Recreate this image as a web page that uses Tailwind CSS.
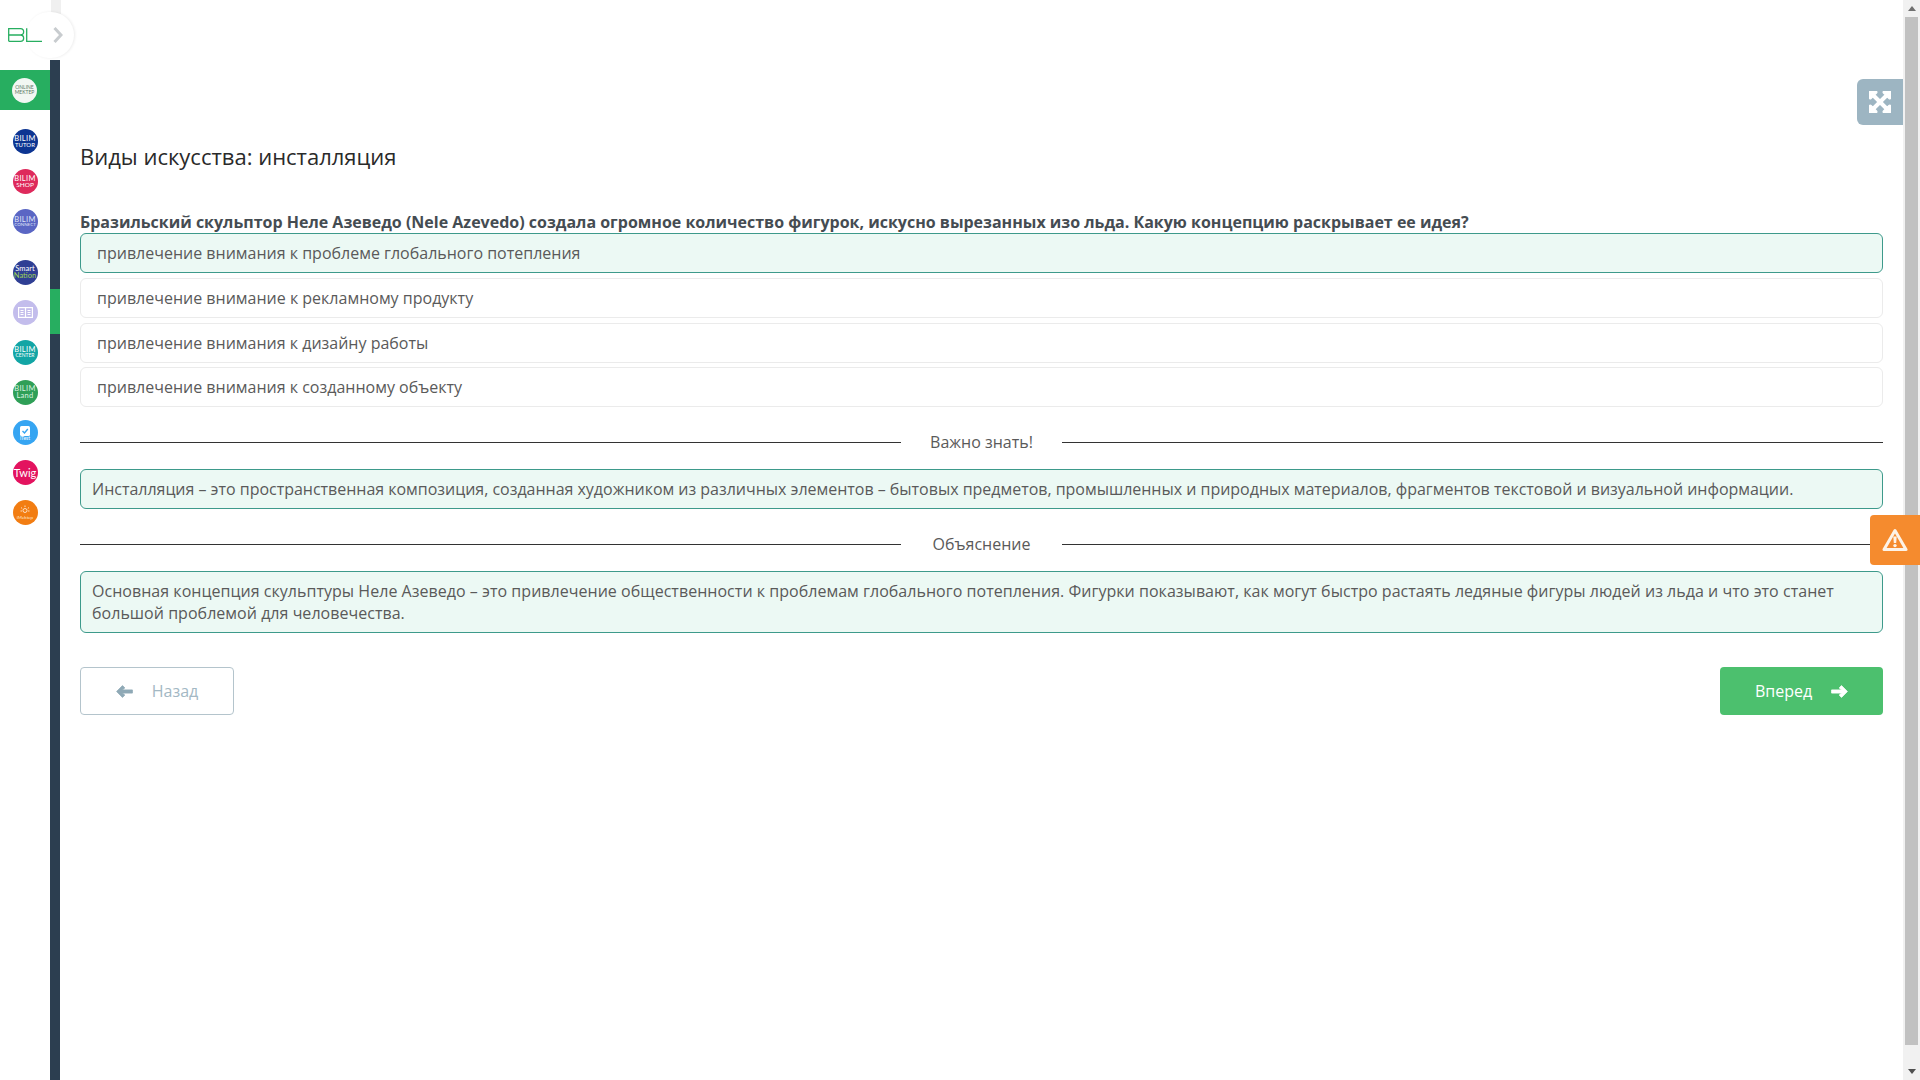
<!DOCTYPE html>
<html lang="ru">
<head>
<meta charset="utf-8">
<title>Виды искусства: инсталляция</title>
<script src="https://cdn.jsdelivr.net/npm/@tailwindcss/browser@4"></script>
</head>
<body class="bg-white overflow-hidden font-['Open_Sans',sans-serif]">
<div class="relative flex h-[1080px] w-[1920px]">
  <!-- icon rail -->
  <aside class="w-[50px] shrink-0 flex flex-col items-center pt-[70px]">
    <div class="h-[40px] w-[50px] bg-[#27ae60] flex items-center justify-center pr-[1px]">
      <div class="w-[25px] h-[25px] rounded-full bg-[#f2f7f3] flex flex-col items-center justify-center font-['Lato',sans-serif] text-[5px] leading-[5px] text-[#5c7a66]"><span>ONLINE</span><span>MEKTEP</span></div>
    </div>
    <div class="w-[49px] flex flex-col items-center">
    <div class="mt-[19px] w-[25px] h-[25px] rounded-full bg-[#0d3592] flex flex-col items-center justify-center font-['Lato',sans-serif] text-[7.5px] tracking-[0.3px] leading-[6px] text-white"><span>BILIM</span><span class="text-[6px] tracking-normal">TUTOR</span></div>
    <div class="mt-[15px] w-[25px] h-[25px] rounded-full bg-[#de2a5c] flex flex-col items-center justify-center font-['Lato',sans-serif] text-[7.5px] tracking-[0.3px] leading-[6px] text-white"><span>BILIM</span><span class="text-[6.5px] tracking-normal">SHOP</span></div>
    <div class="mt-[15px] w-[25px] h-[25px] rounded-full bg-[#5a66c4] flex flex-col items-center justify-center font-['Lato',sans-serif] text-[7.5px] tracking-[0.3px] leading-[5px] text-[#dfe2f7]"><span>BILIM</span><span class="text-[4.5px] tracking-normal">CONNECT</span></div>
    <div class="mt-[26px] w-[25px] h-[25px] rounded-full bg-[#2f3f94] flex flex-col items-center justify-center font-['Lato',sans-serif] text-[7.5px] leading-[6.5px] text-white"><span>Smart</span><span class="text-[#9fd356]">Nation</span></div>
    <div class="mt-[15px] w-[25px] h-[25px] rounded-full bg-[#c3bdec] flex items-center justify-center">
      <svg class="w-[15px] h-[11px]" viewBox="0 0 15 11" fill="none" stroke="#fff" stroke-width="1.2"><rect x=".6" y=".6" width="13.8" height="9.8"/><path d="M7.5 1V10M2.5 3.5H5.5M2.5 5.5H5.5M2.5 7.5H5.5M9.5 3.5H12.5M9.5 5.5H12.5M9.5 7.5H12.5"/></svg>
    </div>
    <div class="mt-[15px] w-[25px] h-[25px] rounded-full bg-[#12a5a5] flex flex-col items-center justify-center font-['Lato',sans-serif] text-[7.5px] tracking-[0.3px] leading-[5.5px] text-white"><span>BILIM</span><span class="text-[5px] tracking-normal">CENTER</span></div>
    <div class="mt-[15px] w-[25px] h-[25px] rounded-full bg-[#2f9f57] flex flex-col items-center justify-center font-['Lato',sans-serif] text-[7.5px] tracking-[0.3px] leading-[6.5px] text-[#d9f2e1]"><span>BILIM</span><span>Land</span></div>
    <div class="mt-[15px] w-[25px] h-[25px] rounded-full bg-[#36a5f2] flex flex-col items-center justify-center font-['Lato',sans-serif] text-[5px] leading-[5px] text-white">
      <svg class="w-[10px] h-[10px] mt-[1px]" viewBox="0 0 10 10"><rect width="10" height="10" rx="1.5" fill="#fff"/><path d="M2.5 5L4.5 7L7.8 3" fill="none" stroke="#36a5f2" stroke-width="1.4"/></svg>
      <span>iTest</span>
    </div>
    <div class="mt-[15px] w-[25px] h-[25px] rounded-full bg-[#e3135f] flex items-center justify-center font-['Lato',sans-serif] text-[11px] leading-none text-white"><span>Twig</span></div>
    <div class="mt-[15px] w-[25px] h-[25px] rounded-full bg-[#f27d12] flex flex-col items-center justify-center font-['Lato',sans-serif] text-[4.5px] leading-[5px] text-[#ffe9d2]">
      <svg class="w-[10px] h-[10px]" viewBox="0 0 10 10" fill="none" stroke="#ffe9d2" stroke-width=".9"><circle cx="5" cy="5.5" r="2"/><path d="M5 .5V2M1 2.5L2.2 3.5M9 2.5L7.8 3.5M.5 6H2M8 6H9.5"/></svg>
      <span>iMektep</span>
    </div>
    </div>
  </aside>

  <!-- dark stripe -->
  <div class="w-[10px] shrink-0 flex flex-col">
    <div class="h-[60px] bg-white"></div>
    <div class="h-[229px] bg-[#2c3e50]"></div>
    <div class="h-[45px] bg-[#27ae60]"></div>
    <div class="flex-1 bg-[#2c3e50]"></div>
  </div>

  <!-- content -->
  <main class="w-[1843px] shrink-0 pl-[20px] pr-[20px] pt-[141px]">
    <h1 class="text-[22px] leading-[30px] font-normal text-[#2a2a2a]">Виды искусства: инсталляция</h1>
    <p class="mt-[41px] text-[16px] leading-[21px] font-bold text-[#454c52]">Бразильский скульптор Неле Азеведо (Nele Azevedo) создала огромное количество фигурок, искусно вырезанных изо льда. Какую концепцию раскрывает ее идея?</p>
    <div class="flex flex-col gap-[5px]">
      <div class="h-[40px] flex items-center px-[16px] rounded-[6px] border border-[#3d9a8b] bg-[#ecf9f4] text-[16px] text-[#5a5a5a]">привлечение внимания к проблеме глобального потепления</div>
      <div class="h-[40px] flex items-center px-[16px] rounded-[6px] border border-[#ebebeb] text-[16px] text-[#5a5a5a]">привлечение внимание к рекламному продукту</div>
      <div class="h-[40px] flex items-center px-[16px] rounded-[6px] border border-[#ebebeb] text-[16px] text-[#5a5a5a]">привлечение внимания к дизайну работы</div>
      <div class="h-[40px] mt-[-1px] flex items-center px-[16px] rounded-[6px] border border-[#ebebeb] text-[16px] text-[#5a5a5a]">привлечение внимания к созданному объекту</div>
    </div>
    <div class="mt-[24px] h-[22px] flex items-center">
      <div class="w-[821px] h-px bg-[#333]"></div>
      <div class="w-[161px] text-center text-[16px] text-[#5a5a5a]">Важно знать!</div>
      <div class="flex-1 h-px bg-[#333]"></div>
    </div>
    <div class="mt-[16px] h-[40px] flex items-center px-[11px] rounded-[6px] border border-[#3d9a8b] bg-[#ecf9f4] text-[16px] tracking-[-0.02px] text-[#5a5a5a]">Инсталляция – это пространственная композиция, созданная художником из различных элементов – бытовых предметов, промышленных и природных материалов, фрагментов текстовой и визуальной информации.</div>
    <div class="mt-[24px] h-[22px] flex items-center">
      <div class="w-[821px] h-px bg-[#333]"></div>
      <div class="w-[161px] text-center text-[16px] text-[#5a5a5a]">Объяснение</div>
      <div class="flex-1 h-px bg-[#333]"></div>
    </div>
    <div class="mt-[16px] h-[62px] flex items-center px-[11px] rounded-[6px] border border-[#3d9a8b] bg-[#ecf9f4] text-[16px] tracking-[0.03px] leading-[22px] text-[#5a5a5a]">Основная концепция скульптуры Неле Азеведо – это привлечение общественности к проблемам глобального потепления. Фигурки показывают, как могут быстро растаять ледяные фигуры людей из льда и что это станет большой проблемой для человечества.</div>
    <div class="mt-[34px] flex justify-between">
      <button class="w-[154px] h-[48px] flex items-center justify-center gap-[19px] rounded-[4px] border border-[#b4c4cc] bg-white text-[16px] text-[#a3b8c4]">
        <svg class="w-[17px] h-[13px]" viewBox="0 0 17 13" fill="#8fa9b6" stroke="#8fa9b6" stroke-width=".8" stroke-linejoin="round"><path d="M.6 6.5L6.5.6L8.8 2.9L6.4 4.9H16.4V8.1H6.4L8.8 10.1L6.5 12.4Z"/></svg>
        <span>Назад</span>
      </button>
      <button class="w-[163px] h-[48px] flex items-center justify-center gap-[19px] rounded-[4px] bg-[#4cc06e] text-[16px] text-white">
        <span>Вперед</span>
        <svg class="w-[17px] h-[13px]" viewBox="0 0 17 13" fill="#fff" stroke="#fff" stroke-width=".8" stroke-linejoin="round"><path d="M16.4 6.5L10.5.6L8.2 2.9L10.6 4.9H.6V8.1H10.6L8.2 10.1L10.5 12.4Z"/></svg>
      </button>
    </div>
  </main>

  <!-- scrollbar -->
  <div class="flex-1 bg-[#f1f1f1] flex flex-col items-center">
    <div class="h-[17px] flex items-center justify-center"><div class="w-0 h-0 border-x-[4px] border-x-transparent border-b-[5px] border-b-[#707070]"></div></div>
    <div class="w-[13px] flex-1 bg-[#c1c1c1]"></div>
    <div class="h-[35px] flex items-end justify-center pb-[6px]"><div class="w-0 h-0 border-x-[4px] border-x-transparent border-t-[5px] border-t-[#505050]"></div></div>
  </div>

  <!-- collapse toggle -->
  <div class="absolute left-[51px] top-[0px] w-[10px] h-[14px] bg-[#f0f0f0]"></div>
  <div class="absolute left-[26px] top-[12px] w-[48px] h-[46px] rounded-full bg-white shadow-[1px_0_3px_rgba(0,0,0,0.08)] flex items-center justify-end pr-[11px]">
    <svg class="w-[10px] h-[16px]" viewBox="0 0 10 16" fill="none" stroke="#c8cccf" stroke-width="3"><path d="M1.5 1L8 8L1.5 15"/></svg>
  </div>
  <div class="absolute left-[8px] top-[28px]">
    <svg class="block w-[34px] h-[14px]" viewBox="0 0 34 14" fill="none" stroke="#27ae60" stroke-width="1.3"><path d="M.7 7H13M.7 13.3H12.5A3.15 3.15 0 0 0 12.5 7A3.15 3.15 0 0 0 12.5 .7H.7V13.3M18.7 .3V13.3H34"/></svg>
  </div>

  <!-- fullscreen -->
  <button class="absolute left-[1857px] top-[79px] w-[46px] h-[46px] rounded-l-[6px] bg-[#9db5c2] flex items-center justify-center">
    <svg class="w-[22px] h-[22px]" viewBox="0 32 448 448" fill="#fff" stroke="#fff" stroke-width="26"><path d="M448.1 344v112c0 13.3-10.7 24-24 24h-112c-21.4 0-32.1-25.9-17-41l36.2-36.2L224 295.6 116.8 402.9 153 439c15.1 15.1 4.4 41-17 41H24c-13.3 0-24-10.7-24-24V344c0-21.4 25.9-32.1 41-17l36.2 36.2L184.5 256 77.2 148.7 41 185c-15.1 15.1-41 4.4-41-17V56c0-13.3 10.7-24 24-24h112c21.4 0 32.1 25.9 17 41l-36.2 36.2L224 216.4l107.3-107.3L295.1 73c-15.1-15.1-4.4-41 17-41h112c13.3 0 24 10.7 24 24v112c0 21.4-25.9 32.1-41 17l-36.2-36.2L263.6 256l107.3 107.3 36.2-36.2c15.1-15.2 41-4.5 41 16.9z"/></svg>
  </button>

  <!-- warning -->
  <button class="absolute left-[1870px] top-[515px] w-[50px] h-[50px] rounded-l-[4px] bg-[#f58b2e] flex items-center justify-center">
    <svg class="w-[26px] h-[24px]" viewBox="0 0 26 24"><path d="M13 2.5L24 21.5H2Z" fill="none" stroke="#fdf3e7" stroke-width="3" stroke-linejoin="round"/><path d="M11.3 8.5H14.7L14.2 15H11.8Z" fill="#fdf3e7"/><circle cx="13" cy="17.6" r="1.7" fill="#fdf3e7"/></svg>
  </button>
</div>
</body>
</html>
